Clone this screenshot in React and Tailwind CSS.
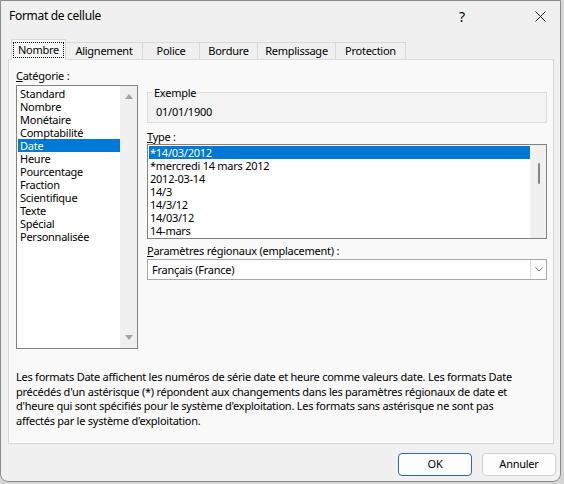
import React from "react";

const cats = ["Standard","Nombre","Monétaire","Comptabilité","Date","Heure","Pourcentage","Fraction","Scientifique","Texte","Spécial","Personnalisée"];
const types = ["*14/03/2012","*mercredi 14 mars 2012","2012-03-14","14/3","14/3/12","14/03/12","14-mars"];
const tabs = [
  ["Alignement","w-[77px]"],
  ["Police","w-[57px]"],
  ["Bordure","w-[58px]"],
  ["Remplissage","w-[78px]"],
  ["Protection","w-[70px]"],
];

export default function App() {
  return (
    <div className="w-[564px] h-[484px] bg-[#d6d6d6] font-['Noto_Sans',sans-serif] text-[11px] tracking-[-0.25px] text-black">
      <div className="w-[561px] h-[482px] flex flex-col bg-[#f0f0f0] border border-[#8c8c8c] rounded-b-[8px] overflow-hidden">
        {/* title bar */}
        <div className="h-[30px] flex items-center pl-[8px] shrink-0">
          <span className="text-[12px] tracking-[-0.3px] flex-1">Format de cellule</span>
          <span className="text-[14px] w-[20px] text-center mr-[63px]">?</span>
          <svg width="11" height="11" viewBox="0 0 11 11" className="mr-[14px]">
            <path d="M0.5 0.5L10.5 10.5M10.5 0.5L0.5 10.5" stroke="#1f1f1f" strokeWidth="1" />
          </svg>
        </div>
        {/* tabs */}
        <div className="pt-[8px] pl-[10px] flex items-end h-[29px] shrink-0">
          <div className="relative z-10 w-[55px] h-[21px] border border-b-0 border-[#d9d9d9] bg-[#f9f9f9] flex items-center justify-center">
            <span className="outline outline-1 outline-dotted outline-black px-[4px] leading-[14px]">Nombre</span>
          </div>
          {tabs.map(([t, w]) => (
            <div key={t} className={`${w} h-[18px] border-t border-r border-[#d9d9d9] bg-[#f0f0f0] flex items-center justify-center`}>
              {t}
            </div>
          ))}
        </div>
        {/* panel */}
        <div className="-mt-[1px] ml-[7px] w-[546px] h-[385px] border border-[#d9d9d9] bg-[#f9f9f9] pl-[7px] pt-[9px] shrink-0">
          <div className="flex">
            {/* left column */}
            <div className="w-[122px] flex flex-col">
              <div className="h-[13px] leading-[13px]"><span className="underline">C</span>atégorie :</div>
              <div className="mt-[3px] h-[264px] border border-[#828282] bg-white flex">
                <div className="flex-1 pt-[1px] pl-[1px]">
                  {cats.map((c) => (
                    <div key={c} className={`h-[13px] leading-[13px] px-[2px] ${c === "Date" ? "bg-[#0078d7] text-white" : ""}`}>{c}</div>
                  ))}
                </div>
                <div className="w-[17px] bg-[#f0f0f0] flex flex-col items-center justify-between py-[8px]">
                  <svg width="8" height="5" viewBox="0 0 8 5"><path d="M4 0L8 5H0Z" fill="#a3a3a3" /></svg>
                  <svg width="8" height="5" viewBox="0 0 8 5"><path d="M0 0H8L4 5Z" fill="#a3a3a3" /></svg>
                </div>
              </div>
            </div>
            {/* right column */}
            <div className="ml-[9px] w-[400px] flex flex-col">
              <fieldset className="mt-[17px] h-[37px] border border-[#dcdcdc] bg-[#f3f3f3] pl-[4px]">
                <legend className="px-[2px] leading-[13px]">Exemple</legend>
                <div className="mt-[6px] ml-[4px] leading-[13px]">01/01/1900</div>
              </fieldset>
              <div className="mt-[7px] h-[13px] leading-[13px]"><span className="underline">T</span>ype :</div>
              <div className="mt-[1px] h-[95px] border border-[#828282] bg-white flex">
                <div className="flex-1 pt-[1px] pl-[1px]">
                  {types.map((t, i) => (
                    <div key={t} className={`h-[13px] leading-[13px] px-[1px] ${i === 0 ? "bg-[#0078d7] text-white" : ""}`}>{t}</div>
                  ))}
                </div>
                <div className="w-[16px] bg-[#f0f0f0] flex justify-center pt-[18px]">
                  <div className="w-[2px] h-[21px] rounded-full bg-[#858585] ml-[1px]" />
                </div>
              </div>
              <div className="mt-[5px] h-[13px] leading-[13px]"><span className="underline">P</span>aramètres régionaux (emplacement) :</div>
              <div className="mt-[2px] h-[21px] border border-[#a8a8a8] bg-white flex items-center">
                <span className="flex-1 pl-[4px] leading-[13px]">Français (France)</span>
                <div className="w-[16px] h-full border-l border-[#e0e0e0] bg-[#fcfcfc] flex items-center justify-center">
                  <svg width="8" height="5" viewBox="0 0 8 5"><path d="M0.5 0.5L4 4L7.5 0.5" fill="none" stroke="#6e6e6e" strokeWidth="1" /></svg>
                </div>
              </div>
            </div>
          </div>
          <p className="mt-[21px] leading-[14.7px] whitespace-nowrap">
            Les formats Date affichent les numéros de série date et heure comme valeurs date. Les formats Date<br />
            précédés d'un astérisque (*) répondent aux changements dans les paramètres régionaux de date et<br />
            d'heure qui sont spécifiés pour le système d'exploitation. Les formats sans astérisque ne sont pas<br />
            affectés par le système d'exploitation.
          </p>
        </div>
        {/* buttons */}
        <div className="mt-[9px] flex justify-end pr-[4px] gap-[10px]">
          <button className="w-[74px] h-[23px] rounded-[4px] border border-[#2e6aa3] bg-[#fdfdfd] text-[11px]">OK</button>
          <button className="w-[74px] h-[23px] rounded-[4px] border border-[#d0d0d0] bg-[#fdfdfd] text-[11px]">Annuler</button>
        </div>
      </div>
    </div>
  );
}
